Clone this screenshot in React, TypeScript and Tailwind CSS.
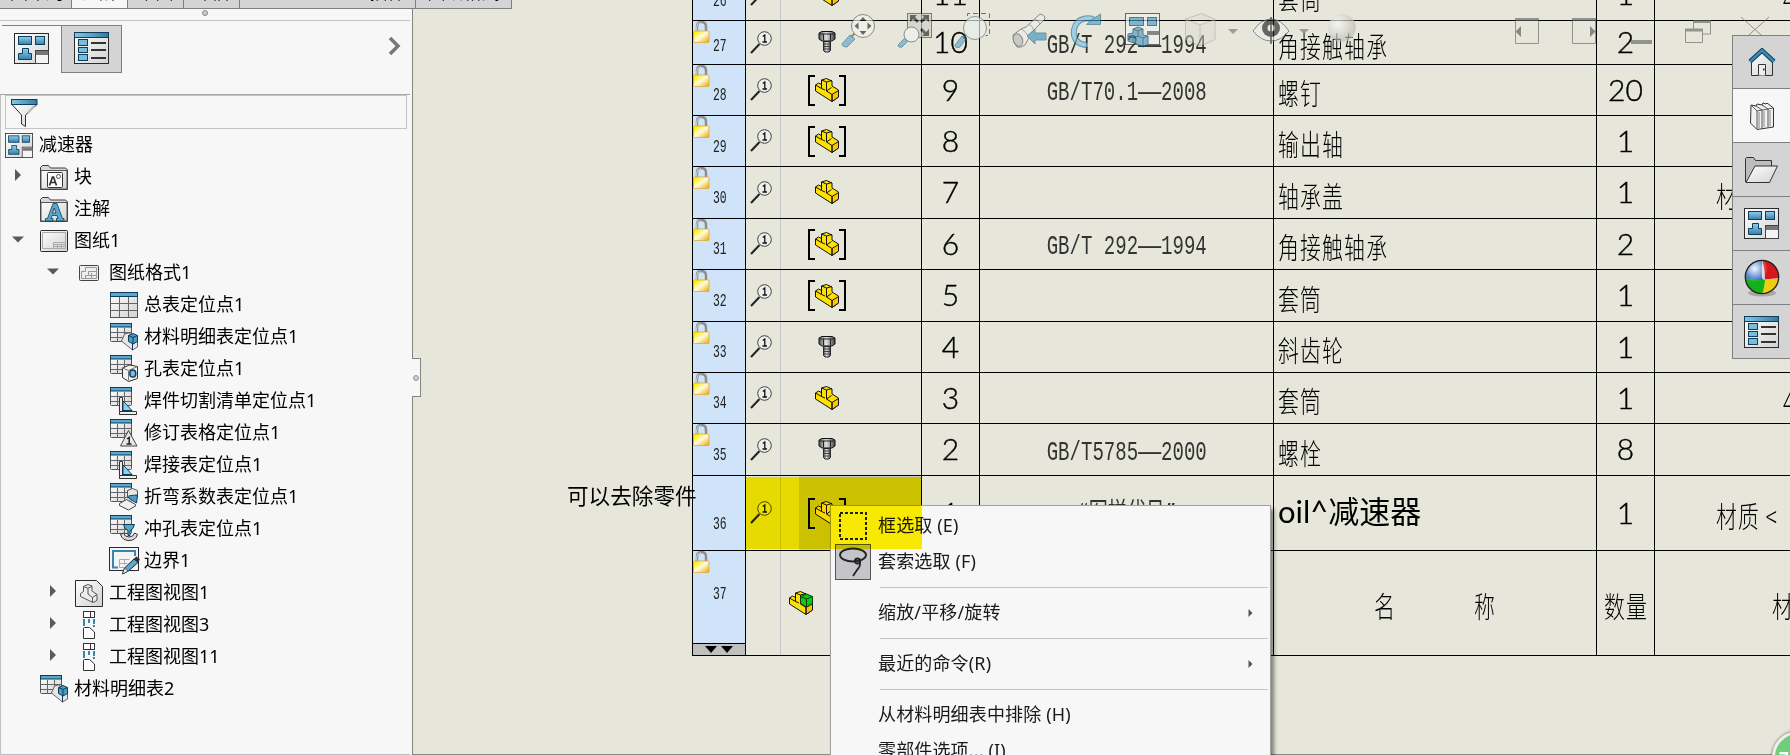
import React from "react";

type P = { className?: string };

const Defs = () => (
  <svg width="0" height="0" className="absolute">
    <defs>
      <linearGradient id="blue" x1="0" y1="0" x2="0" y2="1">
        <stop offset="0" stopColor="#8fd0ee" />
        <stop offset="1" stopColor="#3a7ea6" />
      </linearGradient>
      <linearGradient id="bar" x1="0" y1="0" x2="1" y2="0">
        <stop offset="0" stopColor="#86c8e6" />
        <stop offset="1" stopColor="#35799f" />
      </linearGradient>
      <linearGradient id="paper" x1="0" y1="0" x2="1" y2="1">
        <stop offset="0" stopColor="#ffffff" />
        <stop offset="1" stopColor="#d2d2d2" />
      </linearGradient>
      <linearGradient id="gold" x1="0" y1="0" x2="1" y2="1">
        <stop offset="0" stopColor="#fff200" />
        <stop offset="0.15" stopColor="#ffee10" />
        <stop offset="0.5" stopColor="#fffbe0" />
        <stop offset="1" stopColor="#e8a800" />
      </linearGradient>
      <linearGradient id="steel" x1="0" y1="0" x2="1" y2="0">
        <stop offset="0" stopColor="#555" />
        <stop offset="0.45" stopColor="#e2e2e6" />
        <stop offset="1" stopColor="#444" />
      </linearGradient>
      <radialGradient id="ball" cx="0.35" cy="0.35" r="0.7">
        <stop offset="0" stopColor="#ffffff" />
        <stop offset="0.9" stopColor="#bcbcb4" />
        <stop offset="1" stopColor="#d0d0c8" />
      </radialGradient>
      <radialGradient id="shine" cx="0.28" cy="0.25" r="0.4">
        <stop offset="0" stopColor="#fff" stopOpacity="0.95" />
        <stop offset="1" stopColor="#fff" stopOpacity="0" />
      </radialGradient>
    </defs>
  </svg>
);

const DrawingIcon = ({ className }: P) => (
  <svg className={className} viewBox="0 0 35 31" preserveAspectRatio="none">
    <rect x="0.5" y="0.5" width="34" height="30" fill="url(#paper)" stroke="#2b2b2b" />
    <g fill="url(#blue)" stroke="#0d3d5c">
      <rect x="4.5" y="3.5" width="13" height="8" />
      <rect x="21.5" y="3.5" width="9" height="8" />
      <path d="M8.500 15.500h6v5h3v6h-13v-6h4z" />
    </g>
    <rect x="21.500" y="17.500" width="13" height="13" fill="#f4f4f4" stroke="#444" />
    <rect x="22" y="18" width="12" height="4" fill="#777" />
  </svg>
);

const PropsIcon = ({ className }: P) => (
  <svg className={className} viewBox="0 0 35 32">
    <rect x="0.5" y="0.5" width="34" height="31" fill="url(#paper)" stroke="#2b2b2b" />
    <rect x="0.5" y="0.5" width="34" height="5" fill="url(#bar)" stroke="#0d3d5c" />
    <g fill="#79bcdc" stroke="#0d3d5c">
      <rect x="4.5" y="7.500" width="9" height="6" />
      <rect x="4.5" y="15.500" width="9" height="5" />
      <rect x="4.5" y="22.500" width="9" height="6" />
    </g>
    <path d="M17 11h15M17 18h15M17 26h15" stroke="#333" strokeWidth="2" />
  </svg>
);

const FolderShape = () => (
  <>
    <path d="M0.500 24.500V2.500l2-2h6l2 2.500h15l2 2v19.500z" fill="#d8d8d8" stroke="#3a3a3a" />
    <path d="M1 5.500h26V24H1z" fill="url(#paper)" stroke="#555" />
  </>
);
const BlockFolder = () => (
  <svg width="28" height="25" viewBox="0 0 28 25">
    <FolderShape />
    <rect x="7.500" y="7.500" width="15" height="15" rx="1" fill="#fff" stroke="#333" />
    <path d="M9.500 20.500l3-8.500h1l3 8.500M10.500 17.500h5" fill="none" stroke="#333" strokeWidth="1.700" />
    <circle cx="18.500" cy="11.500" r="2" fill="none" stroke="#555" />
  </svg>
);
const NoteFolder = () => (
  <svg width="28" height="25" viewBox="0 0 28 25">
    <FolderShape />
    <path
      fillRule="evenodd"
      d="M5.500 24v-2.500h2l5.500-15h4l5.500 15h1.500V24h-7.500v-2.500h1.500l-1-3h-5l-1 3H13V24zM12.500 16h3.500l-1.800-5z"
      fill="#5ba7cc"
      stroke="#0d3d5c"
      strokeWidth="0.800"
    />
  </svg>
);
const SheetIcon = () => (
  <svg width="28" height="22" viewBox="0 0 28 22">
    <rect x="0.500" y="0.500" width="27" height="21" rx="1" fill="url(#paper)" stroke="#2b2b2b" />
    <path d="M2.500 2.500h23v16h-23z M13.500 18.500v-6h11.500M13.500 14.500h11.500M13.500 16.500h11.500M17.500 14v4M21.500 14v4" fill="none" stroke="#aaa" />
  </svg>
);
const SheetFormatIcon = () => (
  <svg width="20" height="16" viewBox="0 0 20 16">
    <rect x="0.500" y="0.500" width="19" height="15" rx="1" fill="#eee" stroke="#444" />
    <path d="M2.500 13.500v-7h4v-4h11v11zM6.500 13.500v-3h3v-4h8M9.500 10.500h8M12.500 8v5" fill="none" stroke="#9a9a9a" />
  </svg>
);
const TableIcon = () => (
  <svg width="28" height="26" viewBox="0 0 28 26">
    <rect x="0.500" y="0.500" width="27" height="25" fill="url(#paper)" stroke="#555" />
    <path d="M1 11.500h26M1 18.500h26M9.500 5v20M18.500 5v20" stroke="#666" />
    <rect x="0.500" y="0.500" width="27" height="4" fill="#5ba7cc" stroke="#0d3d5c" />
  </svg>
);
const SmallTable = ({ children }: { children: React.ReactNode }) => (
  <svg width="28" height="28" viewBox="0 0 28 28">
    <rect x="0.500" y="0.500" width="21" height="18" rx="1" fill="url(#paper)" stroke="#555" />
    <path d="M1 9.500h20M1 14.500h20M7.500 5v14M14.500 5v14" stroke="#666" />
    <rect x="0.500" y="0.500" width="21" height="3.500" fill="#5ba7cc" stroke="#0d3d5c" />
    {children}
  </svg>
);
const BomIcon = () => (
  <SmallTable>
    <path d="M11.500 18l3-7 4-1 9 6v8l-5 3z" fill="#e6e6e6" stroke="#666" />
    <path d="M18.500 12.500l4.500-2 4.500 2v6l-4.500 2.500-4.500-2.500z" fill="#4c9cc4" stroke="#0d3d5c" />
    <path d="M18.500 12.500l4.500 2 4.500-2M23 14.500V21M22.500 21v6" fill="none" stroke="#0d3d5c" />
  </SmallTable>
);
const HoleIcon = () => (
  <SmallTable>
    <path d="M12.500 13l7-3 8 1.500v12l-9 3-6-4z" fill="#f2f2f2" stroke="#333" />
    <path d="M12.500 13l6 2.500 9-4M18.500 15.500v10" fill="none" stroke="#777" />
    <ellipse cx="22.800" cy="18.500" rx="3" ry="3.600" fill="#79bcdc" stroke="#0d3d5c" strokeWidth="1.500" />
  </SmallTable>
);
const WeldIcon = () => (
  <SmallTable>
    <path d="M9.500 10.500h3v17h-3z" fill="#eee" stroke="#333" />
    <path d="M13 14l9 9.500h-9z" fill="#8bd3f2" stroke="#0d3d5c" />
    <path d="M9.500 24.500h17v3h-17z" fill="#eee" stroke="#333" />
  </SmallTable>
);
const RevIcon = () => (
  <SmallTable>
    <path d="M18.500 11.500l8.500 15.500H10.500z" fill="#e8e8e8" stroke="#444" />
    <path d="M17 20l2.200-1.500v6.500M16.500 25h5" fill="none" stroke="#222" strokeWidth="1.500" />
  </SmallTable>
);
const BendIcon = () => (
  <SmallTable>
    <path d="M17.500 14V7.500l5-2 5 2V14z" fill="#e6e6e6" stroke="#555" />
    <path d="M17.500 14q5 4 9 6l1-8q-4 0-9 1" fill="#4c9cc4" stroke="#0d3d5c" />
    <path d="M9.500 20.500l7-4 9 5v1.500l-7 4-9-4.500z" fill="#f2f2f2" stroke="#444" />
  </SmallTable>
);
const PunchIcon = () => (
  <SmallTable>
    <path d="M13.500 9.500h11q-1 5-4.500 6v5h-2v-5q-3.500-1-4.500-6z" fill="#5ba7cc" stroke="#0d3d5c" />
    <path d="M10.500 19.500l3-1.500q1 4 5.500 4t5.500-4l3 1.500q-2 6-8.500 6t-8.500-6z" fill="#ddd" stroke="#333" />
  </SmallTable>
);
const BorderIcon = () => (
  <svg width="31" height="28" viewBox="0 0 31 28" className="ml-px shrink-0">
    <rect x="0.500" y="0.500" width="29" height="23" fill="#f4f4f4" stroke="#2b2b2b" />
    <path d="M9 20.500H4V4h22v5" fill="none" stroke="#3a84ae" strokeWidth="2" />
    <path d="M10.500 12.500h10M10.500 16.500h8M10.500 12.500v8h5M15.500 12v6" fill="none" stroke="#aaa" />
    <path d="M13.500 27l2-6L25 12l4 3.500L19.500 24z" fill="#5ba7cc" stroke="#222" />
    <path d="M24.500 12l3-2.500 3.500 3-2.500 3z" fill="#333" />
    <path d="M13.500 27l2-6 3.500 3.200z" fill="#eee" stroke="#333" strokeWidth="0.700" />
  </svg>
);
const ViewIcon = () => (
  <svg width="28" height="27" viewBox="0 0 28 27">
    <path d="M0.500 0.500h21l6 6v20h-27z" fill="url(#paper)" stroke="#2b2b2b" />
    <path
      d="M5.500 13.500l3-2v-5l4.500-2 4 1.500v5l5 3.500v6l-4 2-12.500-6zM8.500 6.500l4.500 1.800 4-2M13 8.500v5.500l4.500 3.500v4.500M17.500 17.500l4.500-3"
      fill="#ececec"
      stroke="#555"
    />
  </svg>
);
const BreakIcon = () => (
  <svg width="14" height="28" viewBox="0 0 14 28">
    <rect x="1.500" y="0.500" width="11" height="6" fill="#fff" stroke="#333" />
    <path d="M8.500 1v5" stroke="#333" />
    <path d="M2 8v7M7 8v4M12 8v5M12 14v2" stroke="#3a84ae" strokeWidth="2" />
    <path d="M1.500 17.500q0-1 1-1h5l5 4.500v6.500h-11z" fill="#fff" stroke="#333" />
  </svg>
);

type Node = { level: number; label: string; icon: React.ReactNode; arrow?: "r" | "d" };
const tree: Node[] = [
  { level: 0, label: "减速器", icon: <DrawingIcon className="h-[25px] w-[28px]" /> },
  { level: 1, label: "块", icon: <BlockFolder />, arrow: "r" },
  { level: 1, label: "注解", icon: <NoteFolder /> },
  { level: 1, label: "图纸1", icon: <SheetIcon />, arrow: "d" },
  { level: 2, label: "图纸格式1", icon: <SheetFormatIcon />, arrow: "d" },
  { level: 3, label: "总表定位点1", icon: <TableIcon /> },
  { level: 3, label: "材料明细表定位点1", icon: <BomIcon /> },
  { level: 3, label: "孔表定位点1", icon: <HoleIcon /> },
  { level: 3, label: "焊件切割清单定位点1", icon: <WeldIcon /> },
  { level: 3, label: "修订表格定位点1", icon: <RevIcon /> },
  { level: 3, label: "焊接表定位点1", icon: <WeldIcon /> },
  { level: 3, label: "折弯系数表定位点1", icon: <BendIcon /> },
  { level: 3, label: "冲孔表定位点1", icon: <PunchIcon /> },
  { level: 3, label: "边界1", icon: <BorderIcon /> },
  { level: 2, label: "工程图视图1", icon: <ViewIcon />, arrow: "r" },
  { level: 2, label: "工程图视图3", icon: <BreakIcon />, arrow: "r" },
  { level: 2, label: "工程图视图11", icon: <BreakIcon />, arrow: "r" },
  { level: 1, label: "材料明细表2", icon: <BomIcon /> },
];
const indent = ["pl-1", "pl-[13px]", "pl-12", "pl-[83px]"];

const TreeRow = ({ n }: { n: Node }) => (
  <div className={`flex h-8 items-center ${indent[n.level]}`}>
    {n.level > 0 && (
      <div className="w-[26px] shrink-0 pb-1">
        {n.arrow === "r" && (
          <svg width="8" height="12">
            <path d="M1 0l6 6-6 6z" fill="#5a5a5a" />
          </svg>
        )}
        {n.arrow === "d" && (
          <svg width="12" height="7" className="-ml-0.5">
            <path d="M0 0.500h12l-6 6z" fill="#5a5a5a" />
          </svg>
        )}
      </div>
    )}
    <div className="flex w-[28px] shrink-0 justify-center">{n.icon}</div>
    <span className="-mt-0.5 ml-[6px] whitespace-nowrap text-[18px] leading-8 text-black">{n.label}</span>
  </div>
);

const Lock = () => (
  <svg width="17" height="22" viewBox="0 0 17 22" className="shrink-0">
    <path d="M4 12V6q0-5 4.500-5T13 6v6" fill="none" stroke="#8e8e8e" strokeWidth="2.500" />
    <path d="M3.700 11V6q0-4 4-4.300" fill="none" stroke="#d5d5d5" strokeWidth="1" />
    <rect x="0.500" y="10" width="15.500" height="11.500" rx="1" fill="url(#gold)" stroke="#d9a52c" strokeWidth="0.700" />
  </svg>
);
const Balloon = () => (
  <svg width="23" height="23" viewBox="0 0 23 23">
    <path d="M1 22L9.500 13" stroke="#222" strokeWidth="2" />
    <circle cx="14.500" cy="7.500" r="6.800" fill="#efefec" fillOpacity="0.800" stroke="#444" />
    <path d="M12.800 5.500l2-1.500v7M12.500 11h4.500" fill="none" stroke="#111" strokeWidth="1.300" />
  </svg>
);
const Part = ({ green = false }: { green?: boolean }) => (
  <svg width="24" height="24" viewBox="0 0 24 24">
    <path d="M0.500 7l3-2 3 1.500V2l5-1.500L17 3v5l6.500 4v7l-6.500 4.500L0.500 13z" fill="#ffe100" stroke="#111" strokeLinejoin="round" />
    <path d="M17 16.500l6.500-4v6.500L17 23.500z" fill="#ffc400" stroke="#111" />
    <path d="M0.500 7l6 3.500 3.500 1.500M6.500 2l5 2L17 2.500M6.500 5.500v5M11.500 4v9M11.500 13l5.500 3.500v7M11.500 13l5-3.500" fill="none" stroke="#111" />
    {green && (
      <>
        <path d="M11.500 5.500l6-2.500 6 2.500v7l-6 3.500-6-3.500z" fill="#12c41c" stroke="#0a3a0a" />
        <path d="M11.500 5.500l6 2.500 6-2.500M17.500 8v8" fill="none" stroke="#0a3a0a" />
      </>
    )}
  </svg>
);
const Bracketed = () => (
  <div className="flex items-center">
    <svg width="7" height="31"><path d="M7 1H1v29h6" fill="none" stroke="#000" strokeWidth="2" /></svg>
    <Part />
    <svg width="7" height="31"><path d="M0 1h6v29H0" fill="none" stroke="#000" strokeWidth="2" /></svg>
  </div>
);
const Bolt = () => (
  <svg width="18" height="22" viewBox="0 0 18 22">
    <path d="M1 2l3-1.500h10L17 2v6l-3 2H4L1 8z" fill="url(#steel)" stroke="#111" />
    <path d="M5.500 3v6.500M12.500 3v6.500M1.500 3h15" stroke="#222" />
    <path d="M5.500 10.500h7v9l-1.500 1.500H7l-1.500-1.500z" fill="url(#steel)" stroke="#222" />
    <path d="M5 13h8M5 15.500h8M5 18h8" stroke="#333" strokeWidth="0.900" />
  </svg>
);

type Row = {
  no: string;
  h: string;
  pad: string;
  kind: "part" | "bracket" | "bolt";
  item: string;
  code?: string;
  name: string;
  qty: string;
  mat?: string;
  sel?: boolean;
};
const rows: Row[] = [
  { no: "26", h: "h-[52px]", pad: "pt-[24px]", kind: "part", item: "11", name: "套筒", qty: "1", mat: "45" },
  { no: "27", h: "h-[44px]", pad: "pt-[17px]", kind: "bolt", item: "10", code: "GB/T 292—1994", name: "角接触轴承", qty: "2" },
  { no: "28", h: "h-[51px]", pad: "pt-[22px]", kind: "bracket", item: "9", code: "GB/T70.1—2008", name: "螺钉", qty: "20" },
  { no: "29", h: "h-[51px]", pad: "pt-[23px]", kind: "bracket", item: "8", name: "输出轴", qty: "1" },
  { no: "30", h: "h-[52px]", pad: "pt-[23px]", kind: "part", item: "7", name: "轴承盖", qty: "1", mat: "材质" },
  { no: "31", h: "h-[51px]", pad: "pt-[22px]", kind: "bracket", item: "6", code: "GB/T 292—1994", name: "角接触轴承", qty: "2" },
  { no: "32", h: "h-[52px]", pad: "pt-[23px]", kind: "bracket", item: "5", name: "套筒", qty: "1" },
  { no: "33", h: "h-[51px]", pad: "pt-[22px]", kind: "bolt", item: "4", name: "斜齿轮", qty: "1" },
  { no: "34", h: "h-[51px]", pad: "pt-[22px]", kind: "part", item: "3", name: "套筒", qty: "1", mat: "45" },
  { no: "35", h: "h-[52px]", pad: "pt-[23px]", kind: "bolt", item: "2", code: "GB/T5785—2000", name: "螺栓", qty: "8" },
  { no: "36", h: "h-[75px]", pad: "pt-[40px]", kind: "bracket", item: "1", code: "“图样代号”", name: "oil^减速器", qty: "1", mat: "材质 <", sel: true },
];

const Thin = ({ children, className = "" }: { children: React.ReactNode; className?: string }) => (
  <span
    className={`inline-block translate-y-[2px] whitespace-pre font-['Noto_Sans_CJK_SC',sans-serif] text-[29px] leading-8 font-light ${className}`}
  >
    {children}
  </span>
);
const RowNo = ({ children, pad }: { children: string; pad: string }) => (
  <span className={`-ml-px ${pad} inline-block origin-left scale-x-[.6] font-['Liberation_Mono',monospace] text-[19px] leading-4 text-[#222]`}>
    {children}
  </span>
);
const Num = ({ children }: { children: string }) => (
  <span className="-mt-[3px] font-['Lato',sans-serif] text-[30px] leading-8 font-light text-black [-webkit-text-stroke:0.4px_#000]">
    {children}
  </span>
);
const head = "flex w-[53px] shrink-0 items-start border-r border-black bg-[#cfe4f8]";

const BomRow = ({ r }: { r: Row }) => (
  <div className={`flex shrink-0 border-b border-black ${r.h}`}>
    <div className={head}>
      <div className="w-[21px] shrink-0">{!r.sel && <Lock />}</div>
      <RowNo pad={r.pad}>{r.no}</RowNo>
    </div>
    <div className="flex w-[35px] shrink-0 items-center border-r border-[#c4c4c8] pb-px pl-1"><Balloon /></div>
    <div className="flex w-[141px] shrink-0 border-r border-black">
      {r.sel && <div className="w-[18px] shrink-0" />}
      <div className={`flex grow items-center ${r.sel ? "bg-[#cccccc] pl-[9px]" : "pl-[27px]"}`}>
        {r.kind === "bracket" ? (
          <Bracketed />
        ) : (
          <div className="flex w-[38px] justify-center pb-px">{r.kind === "part" ? <Part /> : <Bolt />}</div>
        )}
      </div>
    </div>
    <div className="flex w-[58px] shrink-0 items-center justify-center border-r border-black"><Num>{r.item}</Num></div>
    <div className="flex w-[294px] shrink-0 items-center justify-center border-r border-black">
      {r.code && (
        <span className="inline-block translate-y-[3px] scale-x-[.68] whitespace-pre font-['Liberation_Mono','Noto_Sans_CJK_SC',monospace] text-[28px] leading-8 text-[#333]">
          {r.code.split("—").map((s, i) => (
            <React.Fragment key={i}>
              {i > 0 && <span className="mx-[8.500px] inline-block scale-x-[2]">—</span>}
              {s}
            </React.Fragment>
          ))}
        </span>
      )}
    </div>
    <div className="flex w-[323px] shrink-0 items-center border-r border-black pl-1">
      {r.sel ? (
        <span className="-mt-1 font-['Lato','Noto_Sans_CJK_SC',sans-serif] text-[31px] leading-8 whitespace-nowrap">{r.name}</span>
      ) : (
        <Thin className="origin-left scale-x-[.72] tracking-[1.600px]">{r.name}</Thin>
      )}
    </div>
    <div className="flex w-[58px] shrink-0 items-center justify-center border-r border-black"><Num>{r.qty}</Num></div>
    <div className={`flex w-[200px] shrink-0 items-center ${r.mat === "45" ? "pl-[128px]" : "pl-[61px]"}`}>
      {r.mat && <Thin className="origin-left scale-x-[.72] tracking-[1.600px]">{r.mat}</Thin>}
    </div>
  </div>
);

const HeaderRow = () => (
  <div className="flex h-[105px] shrink-0 border-b border-black">
    <div className="flex w-[53px] shrink-0 flex-col border-r border-black bg-[#cfe4f8]">
      <div className="flex grow items-start">
        <div className="w-[21px] shrink-0"><Lock /></div>
        <RowNo pad="pt-[35px]">37</RowNo>
      </div>
      <div className="flex h-[12px] items-center justify-center gap-1 border-t border-black bg-[#c0c0c0]">
        <svg width="12" height="7"><path d="M0 0h12L6 7z" /></svg>
        <svg width="12" height="7"><path d="M0 0h12L6 7z" /></svg>
      </div>
    </div>
    <div className="w-[35px] shrink-0 border-r border-[#c4c4c8]" />
    <div className="flex w-[141px] shrink-0 items-center border-r border-black pl-2"><Part green /></div>
    <div className="w-[58px] shrink-0 border-r border-black" />
    <div className="w-[294px] shrink-0 border-r border-black" />
    <div className="flex w-[323px] shrink-0 items-center border-r border-black pl-[100px]">
      <Thin className="w-[100px] origin-left scale-x-[.72]">名</Thin>
      <Thin className="origin-left scale-x-[.72]">称</Thin>
    </div>
    <div className="flex w-[58px] shrink-0 items-center border-r border-black pl-[7px]">
      <Thin className="origin-left scale-x-[.72] tracking-[1.600px]">数量</Thin>
    </div>
    <div className="flex w-[200px] shrink-0 items-center pl-[117px]">
      <Thin className="origin-left scale-x-[.72]">材料</Thin>
    </div>
  </div>
);

const HeadsUp = () => (
  <svg className="absolute top-[12px] left-[425px] opacity-65" width="960" height="38" viewBox="838 12 960 38">
    <g stroke="#2f6787" fill="#5ba7cc">
      <path d="M842 44l8-9 5 4-8 8q-5 0-5-3z" />
      <path d="M898 45l7-7 3 3-6 6q-4 1-4-2z" />
      <path d="M955 45l7-9 4 3-6 8q-5 2-5-2z" />
    </g>
    <path d="M851 37l5-5M906 40l2-2M963 38l4-4" stroke="#555" strokeWidth="2" />
    <circle cx="863" cy="26" r="11.500" fill="#f4f4f0" stroke="#555" />
    <path d="M863 17l3.500 4h-7zM863 35l3.500-4h-7zM854.500 26l4-3.500v7zM871.500 26l-4-3.500v7z" fill="#222" />
    <rect x="907.500" y="13.500" width="24" height="24" fill="#d0d0c8" stroke="#444" />
    <path d="M910 15h7l-2 2 4 4-2 2-4-4-3 3zM929 15h-7l2 2-4 4 2 2 4-4 3 3zM929 36h-7l2-2-4-4 2-2 4 4 3-3z" fill="#222" />
    <circle cx="911.500" cy="34.500" r="7.500" fill="#eff3f4" stroke="#555" />
    <path d="M967.500 16v-2.500h22v22h-4" fill="none" stroke="#333" strokeDasharray="5 3" />
    <circle cx="975" cy="28" r="11.500" fill="#e9f0f2" stroke="#666" />
    <path d="M1013 35l8-6 5-2 14-13q5 1 5 5l-13 13-7 13q-4 3-8 2-5-5-4-12z" fill="#eeeeec" stroke="#555" />
    <path d="M1021 29q5 2 7 7M1028 24q5 2 6 6M1034 19q5 1 6 5" fill="none" stroke="#888" />
    <ellipse cx="1018" cy="40" rx="4.500" ry="6.500" transform="rotate(-20 1018 40)" fill="#bbb" stroke="#555" />
    <path d="M1027 36l8-7v4h11v7h-11v4z" fill="#3f93bd" stroke="#2f6787" />
    <path d="M1088 45c-12 0-15-8-14-15 2-13 17-15 24-7" fill="none" stroke="#236a90" strokeWidth="6" />
    <path d="M1088 45c-12 0-15-8-14-15 2-13 17-15 24-7" fill="none" stroke="#79c2e4" strokeWidth="4" />
    <path d="M1100.500 14v10.500h-14l4-4z" fill="#4c9cc4" stroke="#2f6787" />
    <rect x="1125.500" y="13.500" width="34" height="31" fill="#f0f0f0" stroke="#222" />
    <g fill="#4c9cc4" stroke="#0d3d5c">
      <rect x="1129.500" y="17.500" width="14" height="8" />
      <rect x="1147.500" y="17.500" width="9" height="8" />
      <path d="M1133 29l5-2 5 2v6l5 1v8l-5 3-6-3-9-3v-7l5-1z" />
    </g>
    <path d="M1133 29l5 2 5-2M1138 31v6M1128 36l5 2 5-2 5 2 5-2M1143 38v8M1133 38v5" fill="none" stroke="#0d3d5c" />
    <rect x="1147" y="31" width="12" height="4" fill="#555" />
    <path d="M1185.500 19l16-5.500 13.500 6v20l-15 6.500-14.500-6zM1185.500 19l14.500 6 15-5.500M1200 25v21" fill="#dcdcd4" stroke="#999" opacity="0.700" />
    <path d="M1228 29h10l-5 5zM1299 29h10l-5 5z" fill="#777" />
    <path d="M1253 31q8-12 18-12t18 12q-8 10-18 10t-18-10z" fill="#eee" stroke="#555" />
    <circle cx="1271" cy="28" r="9" fill="#222" />
    <circle cx="1271" cy="28" r="3.500" fill="#eee" />
    <path d="M1271 17v27" stroke="#111" strokeWidth="1.500" />
    <circle cx="1342" cy="28" r="14" fill="url(#ball)" />
    <g fill="none" stroke="#666">
      <path d="M1515.500 20.500h23v23h-23zM1572.500 20.500h23v23h-23zM1685.500 29.500h17v13h-17zM1693.500 29v-8h17v13h-8M1741 17l28 25M1769 17l-28 25" />
      <path d="M1515 19.500h24M1572 19.500h24M1685 30h18M1693 21.500h18" strokeWidth="3" />
      <path d="M1631 42h21" strokeWidth="4" />
    </g>
    <path d="M1521 26v11l-5.500-5.500zM1590 26v11l5.500-5.500z" fill="#555" />
  </svg>
);

const side: React.ReactNode[] = [
  <svg key="home" width="28" height="29" viewBox="0 0 28 29">
    <path d="M3.500 12L14 3l10.500 9v15.500h-21z" fill="url(#paper)" stroke="#333" />
    <path d="M10.500 27.500v-11h7v11" fill="#eee" stroke="#333" />
    <path d="M15 21.500h1.500" stroke="#333" strokeWidth="2" />
    <path d="M2 13.500L14 2.500l12 11" fill="none" stroke="#0d3d5c" strokeWidth="4.500" />
    <path d="M2 13.500L14 2.500l12 11" fill="none" stroke="#3a8ab4" strokeWidth="2.500" />
  </svg>,
  <svg key="books" width="24" height="28" viewBox="0 0 24 28">
    <path d="M1 3l5 1 1-2 5 1 1-2 3 1 1-1 6.500 5v19L7 27.500 0.500 21z" fill="#f1f1f1" stroke="#333" />
    <path d="M1 3l6 6 16-3M7 9v18M12 8v18.500M18 7v18.500M6 4l6 4M12 3l6 4" fill="none" stroke="#555" />
    <path d="M8 10h2v16H8zM13 9h2v16h-2zM19 8h2v16h-2z" fill="#bbb" />
  </svg>,
  <svg key="folder" width="33" height="26" viewBox="0 0 33 26">
    <path d="M0.500 25V1.500l1-1h7l2 3h16v7" fill="#bdbdbd" stroke="#333" />
    <path d="M1 25.500l9-16.500h22.500l-8 16.500z" fill="url(#paper)" stroke="#333" />
  </svg>,
  <DrawingIcon key="d" className="h-[31px] w-[35px]" />,
  <svg key="ball" width="36" height="38" viewBox="0 0 36 38">
    <ellipse cx="18" cy="34" rx="14" ry="3.500" fill="#888" opacity="0.600" />
    <path d="M18 18.500V1a17 17 0 0 0-17 18q8 3 18 2z" fill="#2b63c6" />
    <path d="M18 1a17 17 0 0 1 17 18l-14 1.500Q21 10 18 1z" fill="#d5161d" />
    <path d="M1 19q9 3 20 1.500 0 8-3 14.500a17 17 0 0 1-17-16z" fill="#12b01d" />
    <path d="M35 19q-6 2-14 1.500 0 8-3 14.500a17 17 0 0 0 17-16z" fill="#f0cd10" />
    <circle cx="18" cy="18" r="16.700" fill="url(#shine)" stroke="#222" strokeWidth="1.300" />
  </svg>,
  <PropsIcon key="p" className="h-[32px] w-[35px]" />,
];

const MenuItem = ({ label, icon, arrow }: { label: string; icon?: React.ReactNode; arrow?: boolean }) => (
  <div className="flex h-9 items-center pl-1">
    <div className="w-[36px] shrink-0">{icon}</div>
    <span className="-mt-[3px] ml-[7px] grow whitespace-pre text-[18px] leading-8 tracking-[0.150px] text-[#1a1a1a]">{label}</span>
    {arrow && <svg width="5" height="8" className="mr-[17px]"><path d="M0.500 0l4 4-4 4z" fill="#555" /></svg>}
  </div>
);
const Sep = () => <div className="my-[7px] mr-[2px] ml-[49px] h-px bg-[#c3c3c3]" />;

const tabs = [
  ["视图布局", "w-[72px] -indent-[8px]", ""],
  ["注解", "w-[56px] justify-center", "bg-[#f7f7f7]"],
  ["草图", "w-[56px] justify-center", ""],
  ["评估", "w-[56px] justify-center", ""],
  ["SOLIDWORKS 插件", "w-[176px] justify-center", ""],
  ["图纸格式", "w-[96px] justify-center", ""],
];

export default function App() {
  return (
    <div className="relative flex h-[755px] w-[1790px] overflow-hidden bg-[#e6e6da] font-['Noto_Sans','Noto_Sans_CJK_SC',sans-serif]">
      <Defs />
      <aside className="flex w-[413px] shrink-0 flex-col border-r border-[#808680] bg-[#f7f7f7]">
        <div className="h-[9px] shrink-0" />
        <div className="flex h-3 w-[410px] shrink-0 justify-center border-b border-[#c4c4c4] pt-px">
          <div className="size-[6px] rounded-full border border-[#888] bg-[#ccc]" />
        </div>
        <div className="flex h-[74px] w-[410px] shrink-0 items-start border-b border-[#a6a6a6] pt-1 pl-0.5">
          <div className="flex h-[48px] w-[59px] justify-center border-t border-[#808080] pt-[7px]">
            <DrawingIcon className="h-[31px] w-[35px]" />
          </div>
          <div className="flex h-[48px] w-[61px] justify-center border border-[#808080] bg-[#d4d4d4] pt-[6px]">
            <PropsIcon className="h-[32px] w-[35px]" />
          </div>
          <svg width="14" height="20" className="mt-[11px] ml-[266px]">
            <path d="M2 2l8 8-8 8" fill="none" stroke="#777" strokeWidth="3.500" />
          </svg>
        </div>
        <div className="flex h-[660px] w-[410px] flex-col border-b border-l border-[#c0c0c0]">
          <div className="ml-1 flex h-[34px] w-[402px] shrink-0 border border-[#c4c4c4] pt-[3px] pl-[5px]">
            <svg width="27" height="29" viewBox="0 0 27 29">
              <path d="M1 5.500L10.500 16v9l4 2.500V16L26 5.500z" fill="url(#paper)" stroke="#333" />
              <path d="M17 14l6-7" stroke="#bbb" strokeWidth="2" />
              <rect x="0.500" y="0.500" width="25.500" height="5" fill="url(#bar)" stroke="#0d3d5c" />
            </svg>
          </div>
          {tree.map((n, i) => (
            <TreeRow key={i} n={n} />
          ))}
        </div>
      </aside>

      <main className="relative flex w-[1377px] flex-col overflow-hidden">
        <div className="-mt-[31px] ml-[279px] flex flex-col border-l border-black">
          {rows.map((r) => (
            <BomRow key={r.no} r={r} />
          ))}
          <HeaderRow />
        </div>
        <HeadsUp />
        <div className="absolute bottom-0 left-0 h-px w-full bg-[#8a8a8a]" />
      </main>

      <div className="absolute top-0 left-0 flex h-[9px] overflow-hidden border-b border-[#808080] bg-[#d4d4d4] text-[18px] leading-[18px]">
        {tabs.map(([t, w, bg]) => (
          <div key={t} className={`flex shrink-0 border-r border-[#808080] ${w} ${bg}`}>
            <span className="-mt-[17px] whitespace-nowrap">{t}</span>
          </div>
        ))}
      </div>

      <div className="absolute top-[358px] left-[412px] flex h-[39px] w-[9px] items-center justify-center border-y border-r border-[#808680] bg-[#f7f7f7]">
        <div className="size-[6px] rounded-full border border-[#999] bg-[#ccc]" />
      </div>

      <nav className="absolute top-[35px] right-0 flex w-[58px] flex-col border-t border-l border-[#808080] bg-[#d4d4d4]">
        {side.map((ic, i) => (
          <div
            key={i}
            className={`flex items-center justify-center border-b border-[#808080] ${i === 0 ? "h-[53px]" : "h-[54px]"} ${i === 1 ? "bg-[#f7f7f7]" : ""}`}
          >
            {ic}
          </div>
        ))}
      </nav>

      <span className="absolute top-[480px] left-[567px] text-[21.600px] leading-8 whitespace-nowrap">可以去除零件</span>

      <div className="absolute top-[505px] left-[830px] flex w-[441px] flex-col border border-[#a0a0a0] bg-[#f7f7f7] pt-[2px] shadow-[3px_4px_4px_rgba(0,0,0,0.45)]">
        <MenuItem
          label="框选取 (E)"
          icon={
            <svg width="28" height="28" className="ml-1">
              <rect x="1" y="1" width="26" height="26" fill="none" stroke="#222" strokeWidth="2" strokeDasharray="3 2" />
            </svg>
          }
        />
        <MenuItem
          label="套索选取 (F)"
          icon={
            <div className="size-[36px] border border-[#555] bg-[#c4c5c9]">
              <svg width="34" height="34" fill="none" stroke="#222" strokeWidth="1.800">
                <ellipse cx="17" cy="10" rx="13" ry="6.500" />
                <circle cx="21.500" cy="16" r="2.500" />
                <path d="M24 16q1 5-3 9l-4 6" />
              </svg>
            </div>
          }
        />
        <Sep />
        <MenuItem label="缩放/平移/旋转" arrow />
        <Sep />
        <MenuItem label="最近的命令(R)" arrow />
        <Sep />
        <MenuItem label="从材料明细表中排除 (H)" />
        <MenuItem label="零部件选项... (I)" />
      </div>

      <div className="absolute top-[477px] left-[746px] h-[72px] w-[176px] bg-[#fff200] mix-blend-multiply" />

      <div className="absolute top-[731px] left-[1772px] size-[52px] rounded-full border-[3px] border-[#eee] bg-[#6fcd7c] pt-[15px] pl-1 text-[17px] leading-5 font-bold text-white shadow-[0_0_3px_#555]">
        75
      </div>
    </div>
  );
}
